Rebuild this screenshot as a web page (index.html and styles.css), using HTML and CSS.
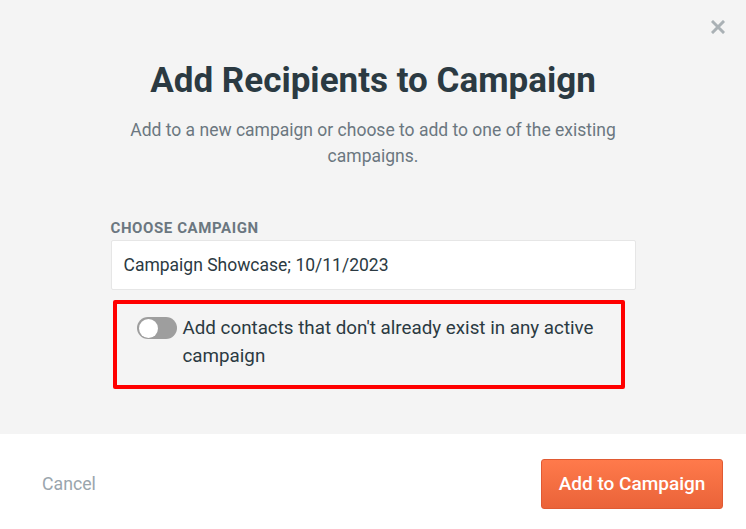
FILE: index.html
```html
<!DOCTYPE html>
<html>
<head>
<meta charset="utf-8">
<link rel="stylesheet" href="styles.css">
</head>
<body>
<div class="modal">
  <div class="content">
    <button class="close" aria-label="Close">
      <svg width="14" height="14" viewBox="0 0 14 14"><path d="M2 2L12 12M12 2L2 12" stroke="#aab1b5" stroke-width="3" stroke-linecap="square"/></svg>
    </button>
    <h1 class="title">Add Recipients to Campaign</h1>
    <p class="subtitle">Add to a new campaign or choose to add to one of the existing campaigns.</p>
    <div class="form">
      <label class="label">CHOOSE CAMPAIGN</label>
      <div class="input">Campaign Showcase; 10/11/2023</div>
      <div class="highlight">
        <span class="toggle"><span class="knob"></span></span>
        <span class="toggle-text">Add contacts that don't already exist in any active campaign</span>
      </div>
    </div>
  </div>
  <div class="footer">
    <span class="cancel">Cancel</span>
    <button class="primary">Add to Campaign</button>
  </div>
</div>
</body>
</html>
```
FILE: styles.css
```css
* { box-sizing: border-box; }
html, body { margin: 0; padding: 0; }
body {
  font-family: Roboto, "Liberation Sans", sans-serif;
  width: 746px;
  height: 529px;
  overflow: hidden;
  background: #ffffff;
}
.modal {
  display: flex;
  flex-direction: column;
  height: 529px;
}
.content {
  position: relative;
  background: #f4f4f4;
  height: 434px;
  display: flex;
  flex-direction: column;
  align-items: center;
  padding-top: 60px;
}
.close {
  position: absolute;
  top: 20px;
  right: 21px;
  border: 0;
  background: transparent;
  padding: 0;
  width: 14px;
  height: 14px;
  display: flex;
}
.title {
  margin: 0;
  font-size: 35px;
  line-height: 42px;
  font-weight: 700;
  color: #2b3a42;
  text-align: center;
}
.subtitle {
  margin: 15px 0 0;
  width: 500px;
  font-size: 17.5px;
  line-height: 26px;
  color: #6b7780;
  text-align: center;
}
.form {
  width: 525px;
  margin-top: 50px;
  display: flex;
  flex-direction: column;
}
.label {
  font-size: 15px;
  font-weight: 700;
  letter-spacing: 0.6px;
  color: #6b7780;
  line-height: 18px;
}
.input {
  margin-top: 3px;
  height: 50px;
  background: #ffffff;
  border: 1px solid #e6e6e6;
  border-radius: 2px;
  padding: 0 12px;
  display: flex;
  align-items: center;
  font-size: 17.5px;
  color: #2b3a42;
}
.highlight {
  margin-top: 10px;
  margin-left: 2px;
  width: 512px;
  height: 89px;
  border: 4px solid #ff0000;
  border-radius: 2px;
  display: flex;
  align-items: flex-start;
  padding: 10px 20px 0 20px;
}
.toggle {
  flex: none;
  width: 40px;
  height: 22px;
  margin-top: 3px;
  border-radius: 11px;
  background: #9e9e9e;
  display: flex;
  align-items: center;
  padding-left: 2px;
}
.knob {
  width: 19px;
  height: 19px;
  border-radius: 50%;
  background: #ffffff;
}
.toggle-text {
  margin-left: 6px;
  width: 425px;
  font-size: 18.8px;
  line-height: 28px;
  color: #2b3a42;
}
.footer {
  flex: 1;
  background: #ffffff;
  display: flex;
  align-items: center;
  justify-content: space-between;
  padding: 4px 23px 0 42px;
}
.cancel {
  font-size: 17.7px;
  color: #9aa5ad;
}
.primary {
  width: 182px;
  height: 50px;
  border: 1px solid #e05a33;
  border-radius: 3px;
  background: linear-gradient(#ff7a4b, #ea6339);
  color: #ffffff;
  font-family: Roboto, "Liberation Sans", sans-serif;
  font-size: 19px;
  font-weight: 500;
  padding: 0;
}
```
